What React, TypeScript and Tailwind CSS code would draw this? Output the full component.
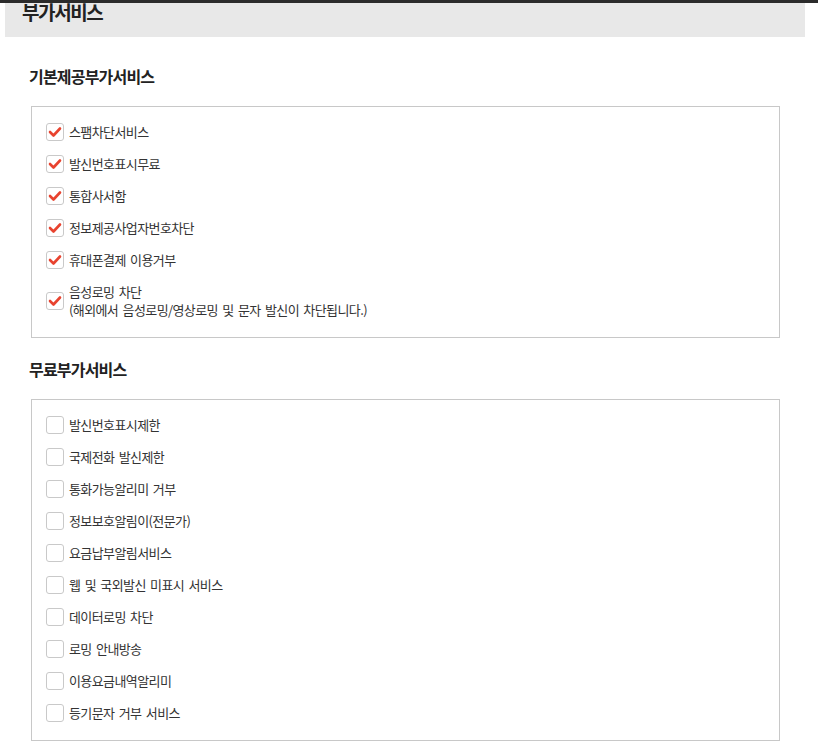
import React from 'react';

const basicServices: { label: string; sub?: string }[] = [
  { label: '스팸차단서비스' },
  { label: '발신번호표시무료' },
  { label: '통합사서함' },
  { label: '정보제공사업자번호차단' },
  { label: '휴대폰결제 이용거부' },
  { label: '음성로밍 차단', sub: '(해외에서 음성로밍/영상로밍 및 문자 발신이 차단됩니다.)' },
];

const freeServices = [
  '발신번호표시제한',
  '국제전화 발신제한',
  '통화가능알리미 거부',
  '정보보호알림이(전문가)',
  '요금납부알림서비스',
  '웹 및 국외발신 미표시 서비스',
  '데이터로밍 차단',
  '로밍 안내방송',
  '이용요금내역알리미',
  '등기문자 거부 서비스',
];

function CheckBox({ checked }: { checked: boolean }) {
  return (
    <span className="w-[18px] h-[18px] shrink-0 border border-[#c9c9c9] rounded-[3px] bg-white flex items-center justify-center">
      {checked && (
        <svg width="14" height="14" viewBox="0 0 14 14">
          <polyline
            points="2,7 5.5,10.5 12,3.5"
            fill="none"
            stroke="#e8432f"
            strokeWidth="2.6"
            strokeLinecap="round"
            strokeLinejoin="round"
          />
        </svg>
      )}
    </span>
  );
}

function Row({ label, sub, checked }: { label: string; sub?: string; checked: boolean }) {
  return (
    <label className="flex items-center gap-[5px] py-[7px]">
      <CheckBox checked={checked} />
      <span className="text-[13px] leading-[18px] tracking-[-0.6px] [word-spacing:2px] text-[#333]">
        {label}
        {sub && (
          <>
            <br />
            {sub}
          </>
        )}
      </span>
    </label>
  );
}

function Section({ title, children, first }: { title: string; children: React.ReactNode; first?: boolean }) {
  return (
    <section className={first ? 'mt-[27px]' : 'mt-[19px]'}>
      <h3 className="-ml-[2px] text-[16px] leading-[24px] font-bold tracking-[-0.8px] text-[#222]">{title}</h3>
      <div className="mt-[18px] w-[749px] border border-[#c8c8c8] pl-[14px] pt-[9px] pb-[11px]">
        {children}
      </div>
    </section>
  );
}

export default function App() {
  return (
    <div
      className="w-[818px] h-[750px] bg-white overflow-hidden"
      style={{ fontFamily: '"Noto Sans CJK KR", "Noto Sans", sans-serif' }}
    >
      <div className="h-[3px] bg-[#2b2b2b]" />
      <div className="ml-[5px] w-[800px] h-[34px] bg-[#e8e8e8] overflow-hidden">
        <h2 className="pl-[17px] -mt-[2px] text-[19px] leading-[22px] font-bold tracking-[-1.4px] text-[#222]">
          부가서비스
        </h2>
      </div>
      <div className="pl-[31px]">
        <Section title="기본제공부가서비스" first>
          {basicServices.map((s) => (
            <Row key={s.label} label={s.label} sub={s.sub} checked />
          ))}
        </Section>
        <Section title="무료부가서비스">
          {freeServices.map((s) => (
            <Row key={s} label={s} checked={false} />
          ))}
        </Section>
      </div>
    </div>
  );
}
